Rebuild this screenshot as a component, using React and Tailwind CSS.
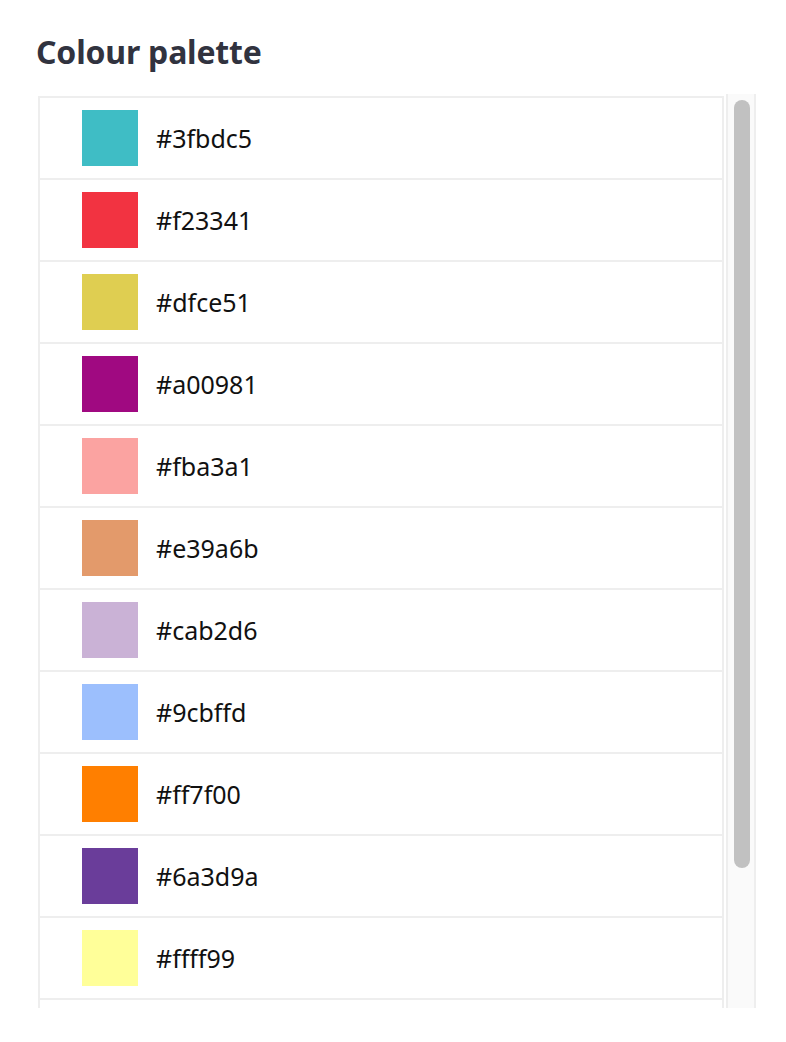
import React from "react";

const colors = [
  "#3fbdc5",
  "#f23341",
  "#dfce51",
  "#a00981",
  "#fba3a1",
  "#e39a6b",
  "#cab2d6",
  "#9cbffd",
  "#ff7f00",
  "#6a3d9a",
  "#ffff99",
];

export default function App() {
  return (
    <div
      className="w-[786px] h-[1042px] bg-white pl-[36px] pt-[28px]"
      style={{ fontFamily: '"Noto Sans", "Open Sans", sans-serif' }}
    >
      <h2 className="text-[32px] leading-[48px] font-bold text-[#31333f] tracking-[-0.2px]">
        Colour palette
      </h2>
      <div className="mt-[18px] ml-[2px] flex items-start h-[914px] w-[718px]">
        <div className="mt-[2px] h-[912px] flex-1 overflow-hidden border-t-2 border-l-2 border-r-2 border-[#eeeeee]">
          {colors.map((c) => (
            <div
              key={c}
              className="h-[82px] flex items-center border-b-2 border-[#eeeeee] pl-[42px] gap-[18px]"
            >
              <div className="w-[56px] h-[56px] shrink-0" style={{ backgroundColor: c }} />
              <span className="text-[25px] text-[#111111] leading-none">{c}</span>
            </div>
          ))}
        </div>
        <div className="ml-[2px] w-[30px] h-[914px] border-l-2 border-r-2 border-[#eeeeee] bg-[#fafafa] pt-[6px] pl-[6px] pr-[4px]">
          <div className="h-[768px] w-[16px] rounded-full bg-[#c1c1c1]" />
        </div>
      </div>
    </div>
  );
}
